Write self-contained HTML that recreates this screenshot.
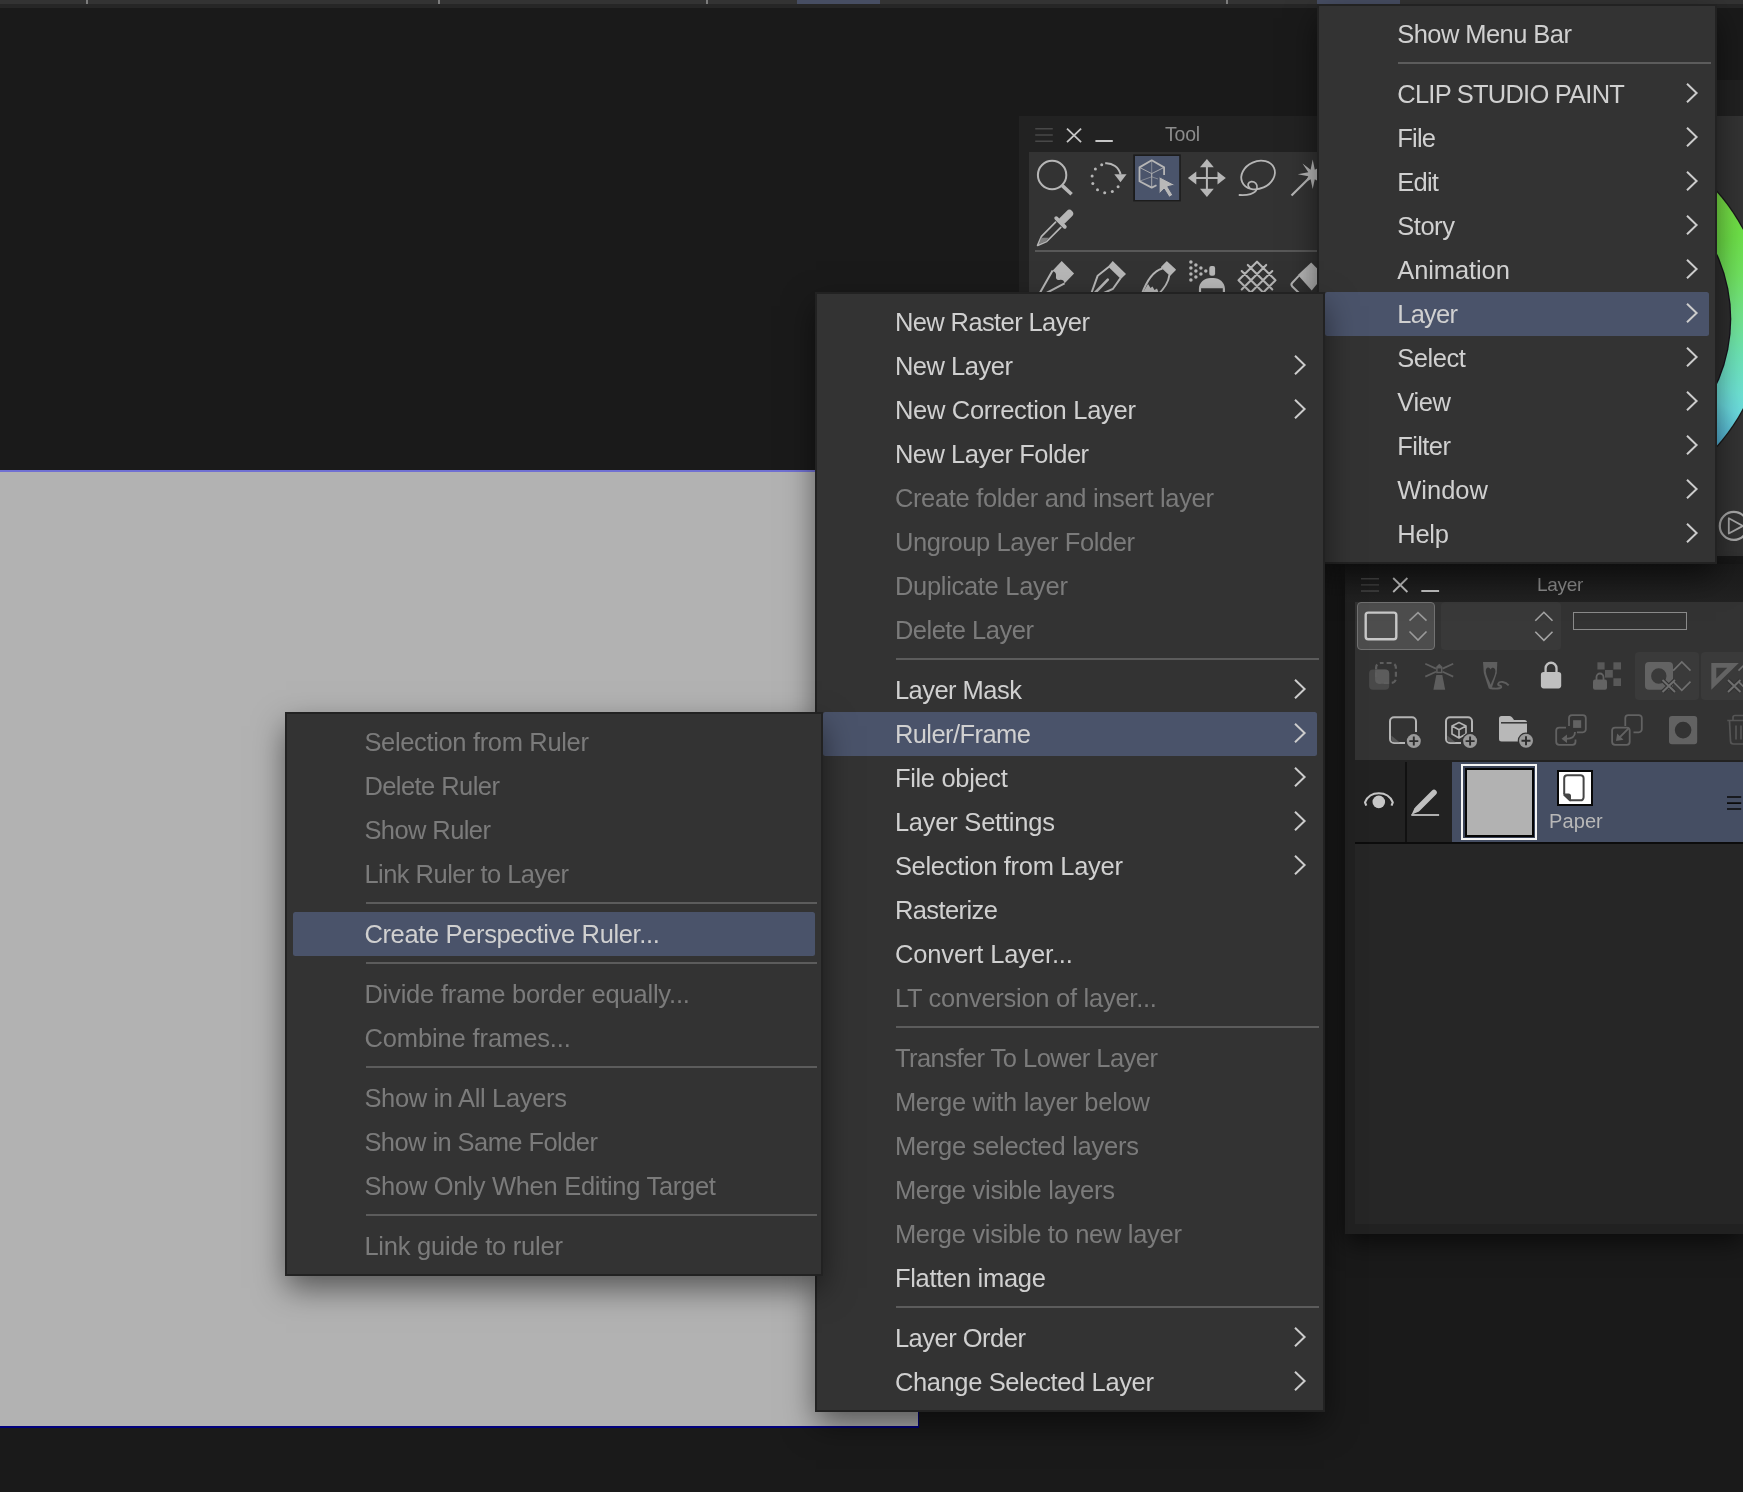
<!DOCTYPE html>
<html lang="en">
<head>
<meta charset="utf-8">
<title>CLIP STUDIO PAINT</title>
<style>
html,body{margin:0;padding:0;}
body{width:1743px;height:1492px;overflow:hidden;position:relative;background:#1a1a1a;font-family:"Liberation Sans",sans-serif;}
.abs{position:absolute;}
.menu{position:absolute;will-change:transform;background:#333333;box-shadow:0 0 0 2px #222222,0 13px 30px 1px rgba(0,0,0,0.52);}
.menu .mi{position:absolute;height:44px;line-height:44px;font-size:25.5px;color:#d0d0d0;white-space:pre;margin-top:0.4px;}
.menu .mi.dis{color:#7b7b7b;}
.menu .sep{position:absolute;height:2px;background:#5c5c5c;}
.menu .hlbg{position:absolute;height:43.6px;background:#4a536a;border-radius:2.5px;}
.menu .chev{position:absolute;}
</style>
</head>
<body>
<!-- top strip -->
<div class="abs" style="left:0;top:0;width:1743px;height:4px;background:#333"></div>
<div class="abs" style="left:0;top:4px;width:1743px;height:4px;background:#262626"></div>
<div class="abs" style="left:85.5px;top:0;width:2px;height:4px;background:#7c7c7c"></div>
<div class="abs" style="left:437.5px;top:0;width:2px;height:4px;background:#7c7c7c"></div>
<div class="abs" style="left:705.5px;top:0;width:2px;height:4px;background:#7c7c7c"></div>
<div class="abs" style="left:1225.5px;top:0;width:2px;height:4px;background:#7c7c7c"></div>
<div class="abs" style="left:797px;top:0;width:83px;height:4px;background:#474e63"></div>
<div class="abs" style="left:1317px;top:0;width:83px;height:4px;background:#474e63"></div>

<!-- canvas -->
<div class="abs" id="canvas" style="left:0;top:470px;width:917.5px;height:954px;background:#b2b2b2;border-top:2px solid #7070d2;border-bottom:2px solid #00007c;border-right:1.5px solid #00007c;box-sizing:content-box"></div>

<!-- tool panel -->
<div class="abs" id="toolpanel" style="left:1019px;top:116px;width:320px;height:190px;background:#222222">
  <div class="abs" style="left:10px;top:36px;width:310px;height:160px;background:#333333"></div>
  <div class="abs" style="left:16px;top:134.3px;width:290px;height:2px;background:#585858"></div>
  <div class="abs" style="left:145.5px;top:5.6px;font-size:19.5px;line-height:24px;color:#8c8c8c;letter-spacing:-0.2px;will-change:transform">Tool</div>
</div>

<svg class="abs" style="left:1019px;top:116px" width="320" height="190" viewBox="1019 116 320 190" fill="none" stroke-linecap="butt">
  <!-- title bar glyphs -->
  <g stroke="#484848" stroke-width="1.4"><path d="M1035.2 128.8H1052.8M1035.2 135H1052.8M1035.2 141.3H1052.8"/></g>
  <g stroke="#c6c6c6" stroke-width="1.8"><path d="M1067 128.6L1081.1 142.2M1081.1 128.6L1067 142.2"/><path d="M1095.4 141H1112.8" stroke-width="2"/></g>
  <!-- magnifier -->
  <circle cx="1052.1" cy="175" r="14.2" stroke="#b6b6b6" stroke-width="2"/>
  <path d="M1062.3 185.6L1071.6 194.3" stroke="#b6b6b6" stroke-width="3.6"/>
  <!-- rotate -->
  <g fill="#b6b6b6">
    <circle cx="1118.1" cy="186.7" r="1.5"/><circle cx="1112.3" cy="191.5" r="1.5"/><circle cx="1104.7" cy="192.7" r="1.5"/>
    <circle cx="1097.5" cy="189.8" r="1.5"/><circle cx="1092.8" cy="183.5" r="1.5"/><circle cx="1092.1" cy="175.9" r="1.5"/>
    <circle cx="1095.4" cy="169" r="1.5"/><circle cx="1101.7" cy="164.7" r="1.5"/>
    <path d="M1114.3 174.2H1126.6L1120.5 182.2Z"/>
  </g>
  <path d="M1105.2 163.2A14.6 14.6 0 0 1 1120.6 174.5" stroke="#b6b6b6" stroke-width="2"/>
  <!-- selected object tool -->
  <rect x="1133.2" y="154.4" width="47.6" height="47" fill="#1c1c1c"/>
  <rect x="1135" y="156" width="44.2" height="44" fill="#4a546b"/>
  <g stroke="#b6b6b6" stroke-linejoin="round">
    <path d="M1164.1 175V167.4L1151.7 160.3L1139.5 167.4V181.2L1151.7 187.6L1156.5 185.2" stroke-width="1.8"/>
    <path d="M1139.5 167.4L1151.7 173.6L1164.1 167.4M1151.7 173.6V187.6" stroke-width="1" opacity="0.85"/>
    <path d="M1151.7 160.3V176.8L1139.5 181.2M1151.7 176.8L1158 179" stroke-width="0.9" opacity="0.6"/>
  </g>
  <path d="M1159.1 176.6L1175.1 184.9L1167.8 186.7L1172.8 195L1169.2 197.3L1164.1 189L1159.1 194.1Z" fill="#b8b8b8" stroke="#4a546b" stroke-width="1"/>
  <!-- move -->
  <g stroke="#b6b6b6" stroke-width="2"><path d="M1194 178H1220M1206.9 165V191"/></g>
  <g fill="#b6b6b6"><path d="M1206.9 159L1200 167.3H1213.8Z"/><path d="M1206.9 197L1200 188.8H1213.8Z"/><path d="M1187.9 178L1196.3 171.4V184.6Z"/><path d="M1225.8 178L1217.5 171.4V184.6Z"/></g>
  <!-- lasso -->
  <g stroke="#b6b6b6" stroke-width="1.8" stroke-linecap="round">
    <ellipse cx="1258.1" cy="175" rx="17.4" ry="13.6" transform="rotate(-24 1258.1 175)"/>
    <path d="M1239.5 195C1247 195.6 1255.5 194 1257 188.5C1258 184 1254.5 181.3 1251.3 181.6C1248 182 1246.9 185.5 1249.5 188"/>
  </g>
  <!-- wand -->
  <path d="M1291.5 195.5L1310 177.3" stroke="#b6b6b6" stroke-width="2.2"/>
  <path d="M1312.7 159.5L1314.8 169.8L1322 166L1317.5 172.500L1327 174.500L1317.500 176.500L1321 183L1314.800 179.200L1312.700 189L1310.600 179.200L1305.500 182L1308.300 176.300L1297.800 174.300L1308.300 172.300L1302.500 163.500L1310.600 169.800Z" fill="#b6b6b6"/>
  <!-- eyedropper -->
  <g stroke="#b6b6b6" stroke-linecap="round">
    <path d="M1062.6 220.4L1069.4 213.6" stroke-width="7.5"/>
    <path d="M1056.2 218.2L1064.8 226.8" stroke-width="3.8"/>
    <path d="M1055.6 222.2L1041.5 236.3L1037.6 245.4L1046.7 241.5L1060.8 227.4" stroke-width="1.7" stroke-linejoin="round"/>
  </g>
  <path d="M1041.2 237.8H1049L1046.3 241.2L1038.6 244.4Z" fill="#7d7d7d"/>
  <!-- row 3 : pencil -->
  <path d="M1061.7 261L1074.1 273.4L1064.5 283.6C1064 280 1062 279.5 1059.5 280C1057 280.5 1055.5 279 1056 276C1056.5 273 1054.5 271.5 1052.3 271Z" fill="#b6b6b6"/>
  <path d="M1052.6 270.6L1037 298L1064.6 283.4" stroke="#b6b6b6" stroke-width="2"/>
  <!-- nib -->
  <path d="M1112.7 261L1126 274L1120.9 279L1108 266.4Z" fill="#b6b6b6"/>
  <path d="M1109 266.8L1097.6 275.8L1090 297M1120.5 278.2L1112.8 289L1096 296.5" stroke="#b6b6b6" stroke-width="2"/>
  <path d="M1107.8 279.6L1092 296" stroke="#b6b6b6" stroke-width="2.6" stroke-linecap="round"/>
  <!-- brush -->
  <path d="M1166.8 261.9L1175.2 269.8L1170 275L1161.7 267.3Z" fill="#b6b6b6" stroke="#b6b6b6" stroke-width="1.4" stroke-linejoin="round"/>
  <path d="M1162.5 268.5C1153 271 1146.5 281 1141.5 295M1169.5 274.5C1168.5 283 1164 289 1157.5 295" stroke="#b6b6b6" stroke-width="2"/>
  <path d="M1148 284L1150.5 288L1152.5 286.5L1154.5 290L1157 288.5L1158.8 293L1141.5 295Z" fill="#b6b6b6"/>
  <!-- airbrush -->
  <g fill="#b6b6b6"><circle cx="1190.9" cy="262" r="1.75"/><circle cx="1190.9" cy="268.1" r="1.75"/><circle cx="1190.9" cy="274.1" r="1.75"/><circle cx="1190.9" cy="280.1" r="1.75"/><circle cx="1195.9" cy="265.1" r="1.75"/><circle cx="1195.9" cy="271.1" r="1.75"/><circle cx="1195.9" cy="277.1" r="1.75"/><circle cx="1200.9" cy="268.1" r="1.75"/><circle cx="1200.9" cy="274.1" r="1.75"/><circle cx="1205.8" cy="271.1" r="1.75"/><rect x="1209.3" y="265.9" width="5.8" height="9.9" rx="2"/><path d="M1198.9 294V289C1198.9 282.500 1204.500 278 1210.500 278H1213.400C1219.400 278 1225 282.500 1225 289V294H1222.800V288.300H1201.100V294Z"/></g>
  <!-- mesh -->
  <path d="M1257.0 261.7L1275.5 280.2M1257.0 261.7L1238.5 280.2M1247.8 264.9L1272.3 289.4M1266.2 264.9L1241.7 289.4M1241.7 271.0L1266.2 295.5M1272.3 271.0L1247.8 295.5M1238.5 280.2L1257.0 298.7M1275.5 280.2L1257.0 298.7" stroke="#b6b6b6" stroke-width="2.1" stroke-linecap="round" stroke-linejoin="round"/>
  <!-- eraser -->
  <path d="M1311.200 262.500L1324 275.500L1311.700 290.400L1297.900 275Z" fill="#b6b6b6"/>
  <path d="M1299 275.600L1292.300 282.800C1291.200 284 1291.200 285.400 1292.300 286.500L1300 294" stroke="#b6b6b6" stroke-width="2"/>
</svg>

<!-- colour wheel panel -->
<div class="abs" id="colorpanel" style="left:1345px;top:80px;width:398px;height:476px;background:#333333;overflow:hidden">
  <div class="abs" style="left:0;top:0;width:398px;height:36px;background:#212121"></div>
  <div class="abs" style="left:37.6px;top:47.6px;width:382.2px;height:382.2px;border-radius:50%;background:conic-gradient(from 90deg at 50% 50%, hsl(135,68%,67%) 0deg, hsl(156,69%,66%) 12deg, hsl(173,67%,66%) 24.6deg, hsl(182,65%,65%) 30deg, hsl(196,60%,58%) 40deg, hsl(204,58%,54%) 46deg, hsl(240,60%,55%) 90deg, hsl(300,60%,55%) 150deg, hsl(0,70%,55%) 210deg, hsl(60,70%,55%) 270deg, hsl(96,66%,54%) 314deg, hsl(100,70%,57%) 320deg, hsl(105,71%,58%) 332.5deg, hsl(112,70%,63%) 344.5deg, hsl(133,68%,67%) 358.4deg, hsl(135,68%,67%) 360deg);box-shadow:0 0 0 1.3px #1a1a1a"></div>
  <div class="abs" style="left:72.5px;top:82.5px;width:312.4px;height:312.4px;border-radius:50%;background:#2e2e2e;box-shadow:0 0 0 1.3px #17121c"></div>
</div>

<!-- layer panel -->
<div class="abs" id="layerpanel" style="left:1345px;top:564px;width:398px;height:670px;background:#212121;box-shadow:0 8px 24px rgba(0,0,0,0.6)">
  <div class="abs" style="left:0;top:0;width:398px;height:38px;background:linear-gradient(#1a1a1a,#222)"></div>
  <div class="abs" style="left:10px;top:38px;width:388px;height:622px;background:#262626"></div>
  <div class="abs" style="left:10px;top:38px;width:388px;height:158px;background:#333333"></div>
  <div class="abs" style="left:192.3px;top:9px;font-size:19px;line-height:24px;color:#8c8c8c;letter-spacing:-0.3px;will-change:transform">Layer</div>
  <!-- row 1 controls -->
  <div class="abs" style="left:12px;top:38px;width:78px;height:47.8px;box-sizing:border-box;background:#4d4d4d;border:1px solid #727272;border-radius:4px"></div>
  <div class="abs" style="left:96px;top:38px;width:120px;height:47.8px;background:#393939;border-radius:4px"></div>
  <div class="abs" style="left:228px;top:48px;width:114px;height:18px;box-sizing:border-box;border:1px solid #8a8a8a;background:#333"></div>
  <!-- row 2 button backgrounds -->
  <div class="abs" style="left:290px;top:88px;width:64px;height:48px;background:#3a3a3a;border-radius:4px"></div>
  <div class="abs" style="left:356px;top:88px;width:64px;height:48px;background:#3a3a3a;border-radius:4px"></div>
  <!-- layer row -->
  <div class="abs" style="left:10px;top:196px;width:388px;height:82px;background:#222222"></div>
  <div class="abs" style="left:60px;top:198px;width:1.5px;height:80px;background:#111"></div>
  <div class="abs" style="left:107.3px;top:198px;width:291px;height:80px;background:#454e63"></div>
  <div class="abs" style="left:10px;top:278px;width:388px;height:1.5px;background:#0c0c0c"></div>
  <!-- thumbnail -->
  <div class="abs" style="left:116px;top:200px;width:76px;height:76px;box-sizing:border-box;border:2px solid #f4f4f4;background:#3a4358"></div>
  <div class="abs" style="left:119.5px;top:203.5px;width:69px;height:69px;box-sizing:border-box;border:2.5px solid #050505;background:#b2b2b2"></div>
  <!-- paper icon -->
  <div class="abs" style="left:212px;top:206px;width:36px;height:36px;box-sizing:border-box;border:2px solid #080808;background:#ffffff"></div>
  <div class="abs" style="left:203.5px;top:245px;font-size:20px;line-height:24px;color:#b8b8b8;letter-spacing:0.1px;will-change:transform">Paper</div>
</div>
<svg class="abs" style="left:1345px;top:564px" width="398" height="300" viewBox="1345 564 398 300" fill="none">
  <!-- title glyphs -->
  <path d="M1361 578.700H1379M1361 584.900H1379M1361 591H1379" stroke="#464646" stroke-width="1.4"/>
  <path d="M1393.200 578L1407.400 592M1407.400 578L1393.200 592" stroke="#c2c2c2" stroke-width="1.8"/>
  <path d="M1421.300 591H1439.100" stroke="#c2c2c2" stroke-width="2"/>
  <!-- row 1 -->
  <rect x="1365.700" y="612.600" width="30.600" height="26.700" rx="2.500" stroke="#c8c8c8" stroke-width="2.400"/>
  <path d="M1409.500 620.700L1418 612.700L1426.500 620.700M1409.500 631.500L1418 640L1426.500 631.500" stroke="#9a9a9a" stroke-width="1.600"/>
  <path d="M1535.300 620.700L1543.900 612.300L1552.500 620.700M1535.300 631.700L1543.900 640.300L1552.500 631.700" stroke="#a4a4a4" stroke-width="1.600"/>
  <!-- row 2 : clip -->
  <rect x="1369.100" y="669.600" width="20.100" height="20.100" rx="4" fill="#494949"/>
  <path d="M1375.100 669.600H1385.200A4 4 0 0 1 1389.200 673.600V683.700H1379.100A4 4 0 0 1 1375.100 679.700Z" fill="#5c5c5c"/>
  <rect x="1376.100" y="663" width="19.800" height="19.800" rx="4.500" stroke="#5e5e5e" stroke-width="2.200" stroke-dasharray="5 3" stroke-dashoffset="2"/>
  <!-- lighthouse -->
  <g fill="#5e5e5e" stroke="none">
    <path d="M1436.300 675H1442.300L1445.200 689.800H1433.400Z"/>
    <path d="M1439.300 663.800L1442.600 667H1436Z"/>
  </g>
  <rect x="1436.900" y="667.700" width="4.800" height="4.800" stroke="#5e5e5e" stroke-width="1.500"/>
  <path d="M1436 668.600L1425.300 663.800M1436 671.800L1425.300 676.600M1442.600 668.600L1453.200 663.800M1442.600 671.800L1453.200 676.600" stroke="#5e5e5e" stroke-width="1.800"/>
  <!-- draft pen -->
  <path d="M1483 662H1497.300L1496.800 673L1491.600 688.400H1488.800L1483.800 673Z" fill="#5e5e5e"/>
  <path d="M1485.800 671.500C1485.600 667 1489.200 666.200 1490.600 669.600C1491.600 666.800 1495.600 667 1495.400 671.500C1495.200 676 1492 680.500 1490.700 684.800C1489.400 680.500 1486 676 1485.800 671.500Z" fill="#333"/>
  <path d="M1489.500 688C1495.500 689 1501.500 688.800 1501.300 686.800C1501 684.800 1497.300 686.300 1498.300 683.500C1499.400 680.800 1505.500 681.500 1508.700 685.300" stroke="#5e5e5e" stroke-width="1.900"/>
  <!-- lock -->
  <rect x="1540.900" y="671.900" width="20.300" height="16.500" rx="2.800" fill="#c0c0c0"/>
  <path d="M1545.600 673V668.200A5.450 5.450 0 0 1 1556.500 668.200V673" stroke="#c0c0c0" stroke-width="2.300"/>
  <!-- lock transparent -->
  <g fill="#595959">
    <rect x="1597.400" y="662.300" width="7.200" height="7.200"/><rect x="1613.400" y="662.300" width="7.600" height="7.200"/>
    <rect x="1605" y="670" width="7.800" height="7.600"/><rect x="1613.400" y="678.300" width="7.600" height="7.700"/>
    <rect x="1593" y="679.600" width="14" height="10.200" rx="2" fill="#636363"/>
  </g>
  <path d="M1596.500 680V677A3.500 3.500 0 0 1 1603.500 677V680" stroke="#636363" stroke-width="1.800"/>
  <!-- reference layer -->
  <path d="M1649 662H1669A4 4 0 0 1 1673 666V685.800A4 4 0 0 1 1669 689.800H1649A4 4 0 0 1 1645 685.800V666A4 4 0 0 1 1649 662ZM1658.800 668.300A7.700 7.700 0 1 0 1658.800 683.700A7.700 7.700 0 1 0 1658.800 668.300Z" fill="#636363" fill-rule="evenodd"/>
  <path d="M1662.500 680L1675 692M1675 680L1662.500 692" stroke="#333" stroke-width="4.500"/>
  <path d="M1662.500 680L1675 692M1675 680L1662.500 692" stroke="#6e6e6e" stroke-width="2"/>
  <path d="M1673.200 670.600L1681.800 662L1690.500 670.600M1673.200 681.600L1681.800 690.300L1690.500 681.600" stroke="#707070" stroke-width="1.600"/>
  <!-- ruler icon -->
  <path d="M1711.300 662.900H1738.800L1711.300 689.800ZM1716.300 667.700V678.500L1727.300 667.700Z" fill="#636363" fill-rule="evenodd"/>
  <path d="M1728 680L1740.500 692M1740.500 680L1728 692" stroke="#333" stroke-width="4.500"/>
  <path d="M1728 680L1740.500 692M1740.500 680L1728 692" stroke="#6e6e6e" stroke-width="2"/>
  <path d="M1738.500 670.600L1747 662M1738.500 681.600L1747 690.300" stroke="#707070" stroke-width="1.600"/>
  <!-- row 3 : new raster layer -->
  <g stroke="#b4b4b4" stroke-width="2">
    <path d="M1405 743H1394A4 4 0 0 1 1390 739V721.200A4 4 0 0 1 1394 717.200H1412A4 4 0 0 1 1416 721.200V732"/>
    <path d="M1461 743H1450A4 4 0 0 1 1446 739V721.200A4 4 0 0 1 1450 717.200H1468A4 4 0 0 1 1472 721.200V732"/>
  </g>
  <path d="M1391.300 735.500L1399.500 742.200H1394.300A3 3 0 0 1 1391.300 739.200Z" fill="#555"/>
  <path d="M1447.300 735.500L1455.500 742.200H1450.300A3 3 0 0 1 1447.300 739.200Z" fill="#555"/>
  <!-- cube -->
  <path d="M1459 722.500L1466 726V734L1459 738L1452 734V726ZM1452 726L1459 729.700L1466 726M1459 729.700V738" stroke="#b4b4b4" stroke-width="1.600" stroke-linejoin="round"/>
  <!-- folder -->
  <path d="M1501.500 716H1509.500C1511 716 1512 717 1513 718.500L1514 720H1524.500A2.500 2.500 0 0 1 1527 722.500V739A2.500 2.500 0 0 1 1524.500 741.500H1501.500A2.500 2.500 0 0 1 1499 739V718.500A2.500 2.500 0 0 1 1501.500 716Z" fill="#b8b8b8"/>
  <path d="M1501 722.800H1527" stroke="#333" stroke-width="1.500"/>
  <!-- plus badges -->
  <g>
    <circle cx="1413.800" cy="741.100" r="8.300" fill="#333"/><circle cx="1413.800" cy="741.100" r="7" fill="#9a9a9a"/>
    <path d="M1409.300 741.100H1418.300M1413.800 736.600V745.600" stroke="#2c2c2c" stroke-width="1.900"/>
    <circle cx="1470.100" cy="741.100" r="8.300" fill="#333"/><circle cx="1470.100" cy="741.100" r="7" fill="#9a9a9a"/>
    <path d="M1465.600 741.100H1474.600M1470.100 736.600V745.600" stroke="#2c2c2c" stroke-width="1.900"/>
    <circle cx="1526" cy="740.800" r="8.300" fill="#333"/><circle cx="1526" cy="740.800" r="7" fill="#9a9a9a"/>
    <path d="M1521.500 740.800H1530.500M1526 736.300V745.300" stroke="#2c2c2c" stroke-width="1.900"/>
  </g>
  <!-- transfer -->
  <g stroke="#626262" stroke-width="1.800">
    <path d="M1569 726V718.100A3 3 0 0 1 1572 715.100H1582.800A3 3 0 0 1 1585.800 718.100V729.300A3 3 0 0 1 1582.800 732.300H1577"/>
    <path d="M1575.500 739.500V741.800A3 3 0 0 1 1572.500 744.800H1559.200A3 3 0 0 1 1556.200 741.800V730.600A3 3 0 0 1 1559.200 727.600H1566"/>
    <path d="M1575 732C1575 737.500 1571.500 738.800 1566 738.800"/>
  </g>
  <rect x="1573.100" y="720.200" width="8.100" height="7.700" fill="#626262"/>
  <path d="M1561.500 738.800L1567 734.500V743.100Z" fill="#626262"/>
  <!-- merge -->
  <g stroke="#626262" stroke-width="1.800">
    <path d="M1625.300 726V718.100A3 3 0 0 1 1628.300 715.100H1638.800A3 3 0 0 1 1641.800 718.100V729.300A3 3 0 0 1 1638.800 732.300H1633.500"/>
    <rect x="1612.100" y="727.600" width="17.600" height="17.200" rx="3"/>
    <path d="M1628.800 728.200L1619 738"/>
  </g>
  <path d="M1616 741L1617.200 733.500L1623.500 739.800Z" fill="#626262"/>
  <!-- mask -->
  <path d="M1672 716H1694.200A3 3 0 0 1 1697.200 719V741.200A3 3 0 0 1 1694.200 744.200H1672A3 3 0 0 1 1669 741.200V719A3 3 0 0 1 1672 716ZM1683.100 721.800A8.300 8.300 0 1 0 1683.100 738.400A8.300 8.300 0 1 0 1683.100 721.800Z" fill="#626262" fill-rule="evenodd"/>
  <!-- trash -->
  <g stroke="#555" stroke-width="1.700">
    <path d="M1727.300 720.500H1750M1733 720.500V717.500A2 2 0 0 1 1735 715.500H1750"/>
    <path d="M1729.500 721L1730.500 741A3 3 0 0 0 1733.500 744H1750"/>
    <path d="M1736 725.500V739.500M1741 725.500V739.500"/>
  </g>
  <!-- eye -->
  <path d="M1366.300 805.700L1365 802.300C1370 790.300 1387.600 790.300 1392.800 802.300L1391.500 805.700" stroke="#c6c6c6" stroke-width="2.100" stroke-linejoin="round"/>
  <circle cx="1378.800" cy="801.900" r="6.300" fill="#c6c6c6"/>
  <!-- pen -->
  <path d="M1417.500 809L1434 792.500" stroke="#c0c0c0" stroke-width="5.600" stroke-linecap="round"/>
  <path d="M1414.600 808L1411.500 814.800L1418.400 811.800Z" fill="#c0c0c0"/>
  <path d="M1411.300 815H1439.100" stroke="#c0c0c0" stroke-width="1.800"/>
  <!-- paper glyph -->
  <path d="M1570.500 800.300H1580.600A3 3 0 0 0 1583.600 797.300V778.200A3 3 0 0 0 1580.600 775.200H1567.200A3 3 0 0 0 1564.200 778.200V794" stroke="#454545" stroke-width="2"/>
  <path d="M1563.400 793.500H1568.500A2.500 2.500 0 0 1 1571 796V801.200H1569.500L1563.400 795.500Z" fill="#454545"/>
  <!-- row menu -->
  <path d="M1727 797H1741.200M1727 803.200H1741.200M1727 809H1741.200" stroke="#0a0a0a" stroke-width="1.700"/>
</svg>

<svg class="abs" style="left:1716px;top:500px" width="27" height="60" viewBox="1716 500 27 60" fill="none">
  <circle cx="1733.800" cy="525.900" r="14" stroke="#a8a8a8" stroke-width="2.200"/>
  <path d="M1728.800 518.300V533.500L1743 525.900Z" stroke="#a8a8a8" stroke-width="1.800" stroke-linejoin="round"/>
</svg>

<div class="menu" id="mainmenu" style="left:1319px;top:6px;width:396px;height:556px">
<div class="mi" style="top:6px;left:78.3000000000001px;letter-spacing:-0.570px">Show Menu Bar</div>
<div class="sep" style="top:56px;left:79.40000000000009px;width:312.5999999999999px"></div>
<div class="mi" style="top:66px;left:78.3000000000001px;letter-spacing:-0.771px">CLIP STUDIO PAINT</div>
<svg class="chev" style="top:75.8px;left:365.9px" width="15" height="22" viewBox="0 0 15 22"><path d="M2 1.8 L11.6 11 L2 20.2" fill="none" stroke="#cccccc" stroke-width="2" stroke-linejoin="miter"/></svg>
<div class="mi" style="top:110px;left:78.3000000000001px;letter-spacing:-0.831px">File</div>
<svg class="chev" style="top:119.8px;left:365.9px" width="15" height="22" viewBox="0 0 15 22"><path d="M2 1.8 L11.6 11 L2 20.2" fill="none" stroke="#cccccc" stroke-width="2" stroke-linejoin="miter"/></svg>
<div class="mi" style="top:154px;left:78.3000000000001px;letter-spacing:-0.784px">Edit</div>
<svg class="chev" style="top:163.8px;left:365.9px" width="15" height="22" viewBox="0 0 15 22"><path d="M2 1.8 L11.6 11 L2 20.2" fill="none" stroke="#cccccc" stroke-width="2" stroke-linejoin="miter"/></svg>
<div class="mi" style="top:198px;left:78.3000000000001px;letter-spacing:-0.483px">Story</div>
<svg class="chev" style="top:207.8px;left:365.9px" width="15" height="22" viewBox="0 0 15 22"><path d="M2 1.8 L11.6 11 L2 20.2" fill="none" stroke="#cccccc" stroke-width="2" stroke-linejoin="miter"/></svg>
<div class="mi" style="top:242px;left:78.3000000000001px;letter-spacing:-0.101px">Animation</div>
<svg class="chev" style="top:251.8px;left:365.9px" width="15" height="22" viewBox="0 0 15 22"><path d="M2 1.8 L11.6 11 L2 20.2" fill="none" stroke="#cccccc" stroke-width="2" stroke-linejoin="miter"/></svg>
<div class="hlbg" style="top:286.2px;left:6.3px;width:383.4px"></div>
<div class="mi hl" style="top:286px;left:78.3000000000001px;letter-spacing:-0.799px">Layer</div>
<svg class="chev" style="top:295.8px;left:365.9px" width="15" height="22" viewBox="0 0 15 22"><path d="M2 1.8 L11.6 11 L2 20.2" fill="none" stroke="#cccccc" stroke-width="2" stroke-linejoin="miter"/></svg>
<div class="mi" style="top:330px;left:78.3000000000001px;letter-spacing:-0.455px">Select</div>
<svg class="chev" style="top:339.8px;left:365.9px" width="15" height="22" viewBox="0 0 15 22"><path d="M2 1.8 L11.6 11 L2 20.2" fill="none" stroke="#cccccc" stroke-width="2" stroke-linejoin="miter"/></svg>
<div class="mi" style="top:374px;left:78.3000000000001px;letter-spacing:-0.404px">View</div>
<svg class="chev" style="top:383.8px;left:365.9px" width="15" height="22" viewBox="0 0 15 22"><path d="M2 1.8 L11.6 11 L2 20.2" fill="none" stroke="#cccccc" stroke-width="2" stroke-linejoin="miter"/></svg>
<div class="mi" style="top:418px;left:78.3000000000001px;letter-spacing:-0.614px">Filter</div>
<svg class="chev" style="top:427.8px;left:365.9px" width="15" height="22" viewBox="0 0 15 22"><path d="M2 1.8 L11.6 11 L2 20.2" fill="none" stroke="#cccccc" stroke-width="2" stroke-linejoin="miter"/></svg>
<div class="mi" style="top:462px;left:78.3000000000001px;letter-spacing:-0.021px">Window</div>
<svg class="chev" style="top:471.8px;left:365.9px" width="15" height="22" viewBox="0 0 15 22"><path d="M2 1.8 L11.6 11 L2 20.2" fill="none" stroke="#cccccc" stroke-width="2" stroke-linejoin="miter"/></svg>
<div class="mi" style="top:506px;left:78.3000000000001px;letter-spacing:-0.284px">Help</div>
<svg class="chev" style="top:515.8px;left:365.9px" width="15" height="22" viewBox="0 0 15 22"><path d="M2 1.8 L11.6 11 L2 20.2" fill="none" stroke="#cccccc" stroke-width="2" stroke-linejoin="miter"/></svg>
</div>
<div class="menu" id="layermenu" style="left:817px;top:294px;width:506px;height:1116px">
<div class="mi" style="top:6px;left:77.9px;letter-spacing:-0.605px">New Raster Layer</div>
<div class="mi" style="top:50px;left:77.9px;letter-spacing:-0.486px">New Layer</div>
<svg class="chev" style="top:59.8px;left:475.9px" width="15" height="22" viewBox="0 0 15 22"><path d="M2 1.8 L11.6 11 L2 20.2" fill="none" stroke="#cccccc" stroke-width="2" stroke-linejoin="miter"/></svg>
<div class="mi" style="top:94px;left:77.9px;letter-spacing:-0.295px">New Correction Layer</div>
<svg class="chev" style="top:103.8px;left:475.9px" width="15" height="22" viewBox="0 0 15 22"><path d="M2 1.8 L11.6 11 L2 20.2" fill="none" stroke="#cccccc" stroke-width="2" stroke-linejoin="miter"/></svg>
<div class="mi" style="top:138px;left:77.9px;letter-spacing:-0.470px">New Layer Folder</div>
<div class="mi dis" style="top:182px;left:77.9px;letter-spacing:-0.339px">Create folder and insert layer</div>
<div class="mi dis" style="top:226px;left:77.9px;letter-spacing:-0.424px">Ungroup Layer Folder</div>
<div class="mi dis" style="top:270px;left:77.9px;letter-spacing:-0.299px">Duplicate Layer</div>
<div class="mi dis" style="top:314px;left:77.9px;letter-spacing:-0.509px">Delete Layer</div>
<div class="sep" style="top:364px;left:79px;width:423px"></div>
<div class="mi" style="top:374px;left:77.9px;letter-spacing:-0.533px">Layer Mask</div>
<svg class="chev" style="top:383.8px;left:475.9px" width="15" height="22" viewBox="0 0 15 22"><path d="M2 1.8 L11.6 11 L2 20.2" fill="none" stroke="#cccccc" stroke-width="2" stroke-linejoin="miter"/></svg>
<div class="hlbg" style="top:418.2px;left:6.3px;width:493.4px"></div>
<div class="mi hl" style="top:418px;left:77.9px;letter-spacing:-0.570px">Ruler/Frame</div>
<svg class="chev" style="top:427.8px;left:475.9px" width="15" height="22" viewBox="0 0 15 22"><path d="M2 1.8 L11.6 11 L2 20.2" fill="none" stroke="#cccccc" stroke-width="2" stroke-linejoin="miter"/></svg>
<div class="mi" style="top:462px;left:77.9px;letter-spacing:-0.323px">File object</div>
<svg class="chev" style="top:471.8px;left:475.9px" width="15" height="22" viewBox="0 0 15 22"><path d="M2 1.8 L11.6 11 L2 20.2" fill="none" stroke="#cccccc" stroke-width="2" stroke-linejoin="miter"/></svg>
<div class="mi" style="top:506px;left:77.9px;letter-spacing:-0.232px">Layer Settings</div>
<svg class="chev" style="top:515.8px;left:475.9px" width="15" height="22" viewBox="0 0 15 22"><path d="M2 1.8 L11.6 11 L2 20.2" fill="none" stroke="#cccccc" stroke-width="2" stroke-linejoin="miter"/></svg>
<div class="mi" style="top:550px;left:77.9px;letter-spacing:-0.308px">Selection from Layer</div>
<svg class="chev" style="top:559.8px;left:475.9px" width="15" height="22" viewBox="0 0 15 22"><path d="M2 1.8 L11.6 11 L2 20.2" fill="none" stroke="#cccccc" stroke-width="2" stroke-linejoin="miter"/></svg>
<div class="mi" style="top:594px;left:77.9px;letter-spacing:-0.588px">Rasterize</div>
<div class="mi" style="top:638px;left:77.9px;letter-spacing:-0.134px">Convert Layer...</div>
<div class="mi dis" style="top:682px;left:77.9px;letter-spacing:-0.266px">LT conversion of layer...</div>
<div class="sep" style="top:732px;left:79px;width:423px"></div>
<div class="mi dis" style="top:742px;left:77.9px;letter-spacing:-0.544px">Transfer To Lower Layer</div>
<div class="mi dis" style="top:786px;left:77.9px;letter-spacing:-0.275px">Merge with layer below</div>
<div class="mi dis" style="top:830px;left:77.9px;letter-spacing:-0.273px">Merge selected layers</div>
<div class="mi dis" style="top:874px;left:77.9px;letter-spacing:-0.281px">Merge visible layers</div>
<div class="mi dis" style="top:918px;left:77.9px;letter-spacing:-0.312px">Merge visible to new layer</div>
<div class="mi" style="top:962px;left:77.9px;letter-spacing:-0.292px">Flatten image</div>
<div class="sep" style="top:1012px;left:79px;width:423px"></div>
<div class="mi" style="top:1022px;left:77.9px;letter-spacing:-0.506px">Layer Order</div>
<svg class="chev" style="top:1031.8px;left:475.9px" width="15" height="22" viewBox="0 0 15 22"><path d="M2 1.8 L11.6 11 L2 20.2" fill="none" stroke="#cccccc" stroke-width="2" stroke-linejoin="miter"/></svg>
<div class="mi" style="top:1066px;left:77.9px;letter-spacing:-0.377px">Change Selected Layer</div>
<svg class="chev" style="top:1075.8px;left:475.9px" width="15" height="22" viewBox="0 0 15 22"><path d="M2 1.8 L11.6 11 L2 20.2" fill="none" stroke="#cccccc" stroke-width="2" stroke-linejoin="miter"/></svg>
</div>
<div class="menu" id="rulermenu" style="left:287px;top:714px;width:534px;height:560px">
<div class="mi dis" style="top:6px;left:77.4px;letter-spacing:-0.343px">Selection from Ruler</div>
<div class="mi dis" style="top:50px;left:77.4px;letter-spacing:-0.567px">Delete Ruler</div>
<div class="mi dis" style="top:94px;left:77.4px;letter-spacing:-0.590px">Show Ruler</div>
<div class="mi dis" style="top:138px;left:77.4px;letter-spacing:-0.530px">Link Ruler to Layer</div>
<div class="sep" style="top:188px;left:78.5px;width:451.5px"></div>
<div class="hlbg" style="top:198.2px;left:6.3px;width:521.4px"></div>
<div class="mi hl" style="top:198px;left:77.4px;letter-spacing:-0.355px">Create Perspective Ruler...</div>
<div class="sep" style="top:248px;left:78.5px;width:451.5px"></div>
<div class="mi dis" style="top:258px;left:77.4px;letter-spacing:-0.196px">Divide frame border equally...</div>
<div class="mi dis" style="top:302px;left:77.4px;letter-spacing:-0.114px">Combine frames...</div>
<div class="sep" style="top:352px;left:78.5px;width:451.5px"></div>
<div class="mi dis" style="top:362px;left:77.4px;letter-spacing:-0.345px">Show in All Layers</div>
<div class="mi dis" style="top:406px;left:77.4px;letter-spacing:-0.572px">Show in Same Folder</div>
<div class="mi dis" style="top:450px;left:77.4px;letter-spacing:-0.288px">Show Only When Editing Target</div>
<div class="sep" style="top:500px;left:78.5px;width:451.5px"></div>
<div class="mi dis" style="top:510px;left:77.4px;letter-spacing:-0.234px">Link guide to ruler</div>
</div>
</body>
</html>
